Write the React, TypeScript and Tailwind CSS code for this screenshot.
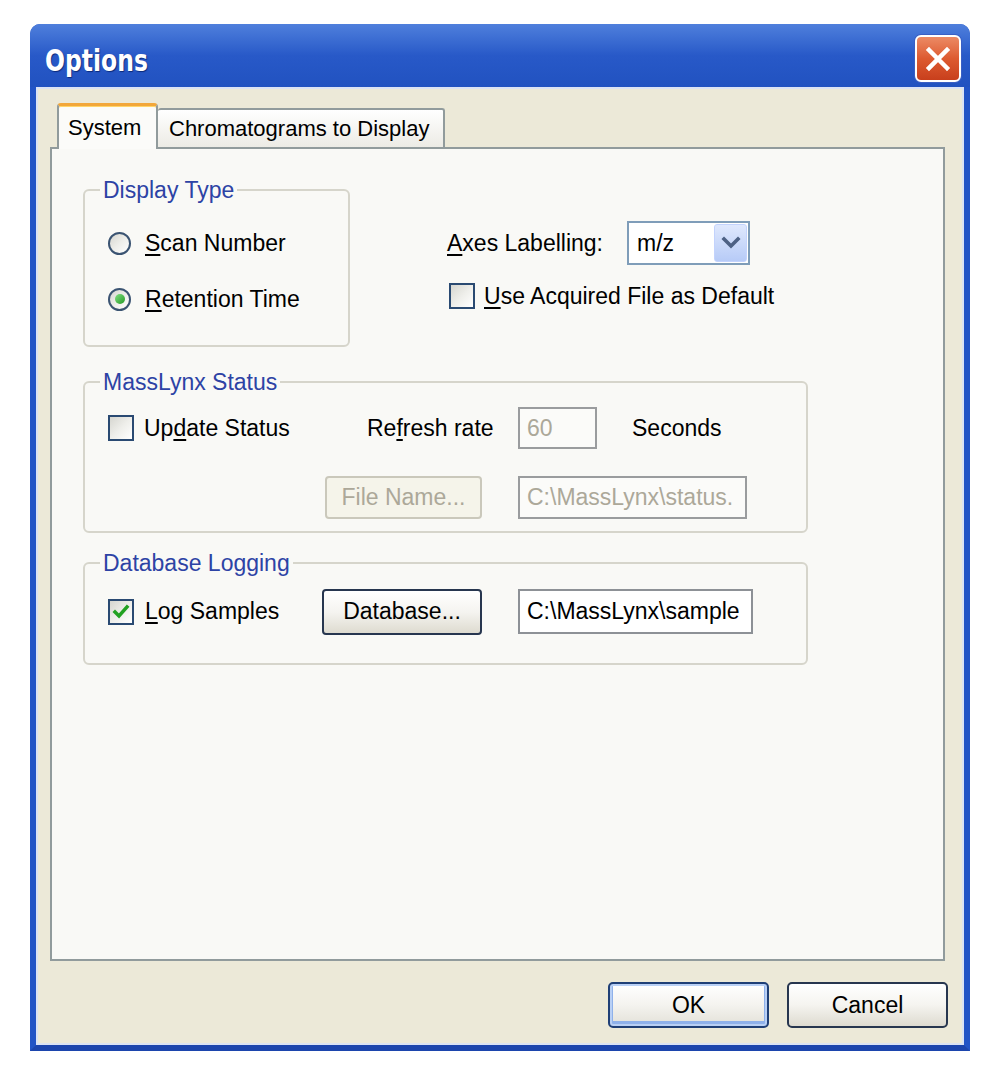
import React from "react";

function CloseButton() {
  return (
    <div className="mt-[11px] w-[46px] h-[47px] rounded-[6px] border-2 border-white bg-linear-to-b from-[#ec8a64] via-[#dd5a30] to-[#c83f1c] shadow-[0_0_0_1px_#3a5fc4] flex items-center justify-center">
      <svg width="30" height="30" viewBox="0 0 30 30">
        <path d="M6 6 L24 24 M24 6 L6 24" stroke="#ffffff" strokeWidth="4.5" strokeLinecap="square" fill="none" />
      </svg>
    </div>
  );
}

function Checkbox({ checked = false }: { checked?: boolean }) {
  return (
    <div className="w-[26px] h-[26px] shrink-0 border-2 border-[#2a4a72] bg-linear-to-br from-[#d6d6d0] via-[#eeeeea] to-white flex items-center justify-center">
      {checked && (
        <svg width="18" height="18" viewBox="0 0 18 18">
          <path d="M3 9 L7 13 L15 4" stroke="#21a121" strokeWidth="3.5" fill="none" strokeLinecap="square" />
        </svg>
      )}
    </div>
  );
}

function Radio({ checked = false }: { checked?: boolean }) {
  return (
    <div className="w-[23px] h-[23px] shrink-0 rounded-full border-2 border-[#3b5472] bg-linear-to-br from-[#d6d6d0] via-[#eeeeea] to-white flex items-center justify-center">
      {checked && (
        <div className="w-[10px] h-[10px] rounded-full bg-linear-to-br from-[#7fe07f] to-[#1e9a22]" />
      )}
    </div>
  );
}

function Group({
  title,
  className,
  children,
}: {
  title: string;
  className: string;
  children: React.ReactNode;
}) {
  return (
    <fieldset className={`border-2 border-[#d6d5cb] rounded-[6px] pl-[15px] pr-[8px] m-0 min-w-0 ${className}`}>
      <legend className="px-[3px] text-[#2d43a5] leading-[26px]">{title}</legend>
      {children}
    </fieldset>
  );
}

export default function App() {
  return (
    <div className="w-[1000px] h-[1080px] bg-white pt-[24px] pl-[30px] font-['Liberation_Sans',Arial,sans-serif] text-[23px] text-black leading-none">
      <div className="w-[940px] h-[1027px] flex flex-col rounded-t-[10px] overflow-hidden bg-[#2254c6]">
        {/* Title bar */}
        <div className="h-[63px] shrink-0 flex items-start justify-between pl-[15px] pr-[9px] bg-linear-to-b from-[#4f7fdc] via-[#2859c8] to-[#2152c0]">
          <span className="mt-[20px] inline-block origin-left scale-x-[0.87] text-white font-bold text-[30px] leading-[34px] font-['Liberation_Sans_Narrow','DejaVu_Sans_Condensed',sans-serif] [text-shadow:1px_1px_1px_#0b2a7a]">
            Options
          </span>
          <CloseButton />
        </div>

        {/* Body */}
        <div className="flex-1 flex flex-col border-x-[6px] border-b-[6px] border-x-[#2254c6] border-b-[#1c45ad]">
          <div className="flex-1 flex flex-col border-2 border-[#dbe3f4] bg-[#ece9d8]">
            {/* Tabs */}
            <div className="mt-[14px] ml-[12px] h-[44px] flex items-end pl-[7px]">
              <div className="relative z-10 -mb-[2px] w-[101px] h-[46px] rounded-t-[4px] border-x-2 border-t-[3px] border-x-[#919b9c] border-t-[#f2a73a] bg-[#fbfbf9] flex items-center pl-[9px] text-[22px] shadow-[inset_0_1px_0_#ffd56a]">
                System
              </div>
              <div className="w-[287px] h-[39px] rounded-t-[3px] border-2 border-b-0 border-l-0 border-[#919b9c] bg-linear-to-b from-white to-[#ecebe5] flex items-center pl-[11px] text-[22px]">
                Chromatograms to Display
              </div>
            </div>

            {/* Panel */}
            <div className="ml-[12px] mr-[17px] h-[814px] border-2 border-[#919b9c] bg-[#f9f9f6] pl-[31px] pt-[28px] flex flex-col">
              {/* Row 1 */}
              <div className="flex items-start">
                <Group title="Display Type" className="w-[267px] h-[170px]">
                  <div className="mt-[22px] flex flex-col gap-[20px]">
                    <div className="h-[36px] flex items-center pl-[8px] gap-[14px]">
                      <Radio />
                      <span>
                        <span className="underline underline-offset-[3px]">S</span>can Number
                      </span>
                    </div>
                    <div className="h-[36px] flex items-center pl-[8px] gap-[14px]">
                      <Radio checked />
                      <span>
                        <span className="underline underline-offset-[3px]">R</span>etention Time
                      </span>
                    </div>
                  </div>
                </Group>

                <div className="ml-[97px] pt-[44px] flex flex-col">
                  <div className="flex items-center">
                    <span className="w-[180px]">
                      <span className="underline underline-offset-[3px]">A</span>xes Labelling:
                    </span>
                    <div className="w-[123px] h-[44px] border-2 border-[#7f9db9] bg-white flex items-center justify-between pl-[8px] pr-[1px]">
                      <span>m/z</span>
                      <div className="w-[33px] h-[38px] rounded-[3px] bg-linear-to-b from-[#dfe8fd] to-[#b7cbf7] border border-[#c3d3fd] flex items-center justify-center">
                        <svg width="20" height="16" viewBox="0 0 20 16">
                          <path d="M3 4 L10 11 L17 4" stroke="#4d6185" strokeWidth="3.6" fill="none" strokeLinecap="square" />
                        </svg>
                      </div>
                    </div>
                  </div>
                  <div className="mt-[18px] pl-[2px] flex items-center gap-[9px]">
                    <Checkbox />
                    <span>
                      <span className="underline underline-offset-[3px]">U</span>se Acquired File as Default
                    </span>
                  </div>
                </div>
              </div>

              {/* MassLynx Status */}
              <Group title="MassLynx Status" className="mt-[22px] w-[725px] h-[164px]">
                <div className="mt-[12px] h-[42px] flex items-center">
                  <div className="w-[267px] pl-[8px] flex items-center gap-[10px]">
                    <Checkbox />
                    <span>
                      Up<span className="underline underline-offset-[3px]">d</span>ate Status
                    </span>
                  </div>
                  <span className="w-[151px]">
                    Re<span className="underline underline-offset-[3px]">f</span>resh rate
                  </span>
                  <div className="w-[79px] h-[42px] border-2 border-[#9a9c9e] bg-[#fbfbf9] flex items-center pl-[7px] text-[#aca899]">
                    60
                  </div>
                  <span className="ml-[35px]">Seconds</span>
                </div>
                <div className="mt-[25px] h-[46px] pl-[225px] flex items-center">
                  <div className="w-[157px] h-[43px] rounded-[4px] border-2 border-[#cac8bb] bg-[#f5f4ea] flex items-center justify-center text-[#aca899]">
                    File Name...
                  </div>
                  <div className="ml-[36px] w-[229px] h-[43px] border-2 border-[#9a9c9e] bg-[#fbfbf9] flex items-center pl-[7px] text-[#aca899] overflow-hidden whitespace-nowrap">
                    C:\MassLynx\status.
                  </div>
                </div>
              </Group>

              {/* Database Logging */}
              <Group title="Database Logging" className="mt-[17px] w-[725px] h-[115px]">
                <div className="mt-[11px] h-[49px] flex items-center">
                  <div className="w-[222px] pl-[8px] flex items-center gap-[11px]">
                    <Checkbox checked />
                    <span>
                      <span className="underline underline-offset-[3px]">L</span>og Samples
                    </span>
                  </div>
                  <div className="w-[160px] h-[46px] rounded-[4px] border-2 border-[#27364f] bg-linear-to-b from-white via-[#f5f4f0] to-[#dedbd0] flex items-center justify-center">
                    Database...
                  </div>
                  <div className="ml-[36px] w-[235px] h-[45px] border-2 border-[#8d9196] bg-white flex items-center pl-[7px] overflow-hidden whitespace-nowrap">
                    C:\MassLynx\sample
                  </div>
                </div>
              </Group>
            </div>

            {/* Buttons */}
            <div className="mt-[21px] pr-[14px] flex justify-end gap-[18px]">
              <div className="w-[161px] h-[46px] rounded-[5px] border-2 border-[#1f3f76] bg-linear-to-b from-white via-[#f4f3ef] to-[#e3e1d8] shadow-[inset_0_0_0_2px_#b9d0f5,inset_0_-2px_0_3px_#8fb1ea] flex items-center justify-center">
                OK
              </div>
              <div className="w-[161px] h-[46px] rounded-[5px] border-2 border-[#27364f] bg-linear-to-b from-white via-[#f5f4f0] to-[#dedbd0] flex items-center justify-center">
                Cancel
              </div>
            </div>
          </div>
        </div>
      </div>
    </div>
  );
}
